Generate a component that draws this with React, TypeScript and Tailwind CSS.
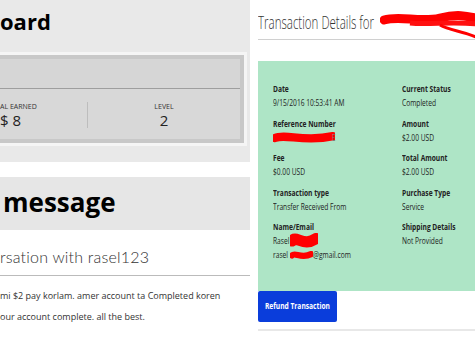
import React from 'react';

const open = { fontFamily: '"Open Sans", "Liberation Sans", sans-serif' };

const details = [
  [
    { label: 'Date', lines: ['9/15/2016 10:53:41 AM'] },
    { label: 'Reference Number', lines: ['ref'] },
    { label: 'Fee', lines: ['$0.00 USD'] },
    { label: 'Transaction type', lines: ['Transfer Received From'] },
    { label: 'Name/Email', lines: ['name', 'email'] },
  ],
  [
    { label: 'Current Status', lines: ['Completed'] },
    { label: 'Amount', lines: ['$2.00 USD'] },
    { label: 'Total Amount', lines: ['$2.00 USD'] },
    { label: 'Purchase Type', lines: ['Service'] },
    { label: 'Shipping Details', lines: ['Not Provided'] },
  ],
];

// the right panel uses a condensed face; squeeze Open Sans to get it
const Cond = ({ children }: { children: React.ReactNode }) => (
  <span className="inline-block origin-left scale-x-[0.7] whitespace-nowrap">{children}</span>
);

// red marker over the private bits
const Blob = ({ w, h }: { w: number; h: number }) => (
  <svg width={w} height={h} viewBox={`0 0 ${w} ${h}`} className="inline-block align-middle shrink-0">
    <path
      d={`M2 ${h / 2} C ${w * 0.2} ${h * 0.1}, ${w * 0.5} ${h * 0.9}, ${w - 2} ${h * 0.35}`}
      stroke="#ff0000"
      strokeWidth={h * 0.7}
      strokeLinecap="round"
      fill="none"
    />
  </svg>
);

const Value = ({ v }: { v: string }) => {
  if (v === 'ref')
    return (
      <div className="flex items-center h-[14px]">
        <Blob w={62} h={12} />
        <span className="-ml-[4px] text-[#777] scale-x-[0.7]">E</span>
      </div>
    );
  if (v === 'name')
    return (
      <div className="flex items-center h-[14px]">
        <span className="inline-block w-[17px] origin-left scale-x-[0.7]">Rasel</span>
        <Blob w={28} h={16} />
      </div>
    );
  if (v === 'email')
    return (
      <div className="flex items-center h-[14px]">
        <span className="inline-block w-[17px] origin-left scale-x-[0.7]">rasel</span>
        <Blob w={23} h={9} />
        <Cond>@gmail.com</Cond>
      </div>
    );
  return (
    <div className="h-[14px]">
      <Cond>{v}</Cond>
    </div>
  );
};

export default function App() {
  return (
    <div className="w-[475px] h-[342px] overflow-hidden bg-white flex" style={open}>
      {/* left: dashboard + messages */}
      <div className="w-[250px] shrink-0 overflow-hidden">
        <div className="bg-[#e9e9e9] pt-[6px] pb-[16px]">
          <h1 className="text-[22px] font-bold leading-[30px] text-black">oard</h1>
          <div className="mt-[16px] -ml-[10px] mr-[3px] border-[3px] border-[#f5f5f5]">
            <div className="border-[4px] border-[#c8c8c8] bg-[#d8d8d8]">
              <div className="h-[30px] border-b border-[#9e9e9e] bg-[#d6d6d6]" />
              <div className="h-[50px] flex items-center pt-[2px]">
                <div className="w-[91px] pl-[3px] border-r border-[#bdbdbd] h-[26px] flex flex-col justify-center">
                  <div className="text-[7px] leading-[10px] text-[#333]">AL EARNED</div>
                  <div className="text-[15px] leading-[16px] text-[#222]">$ 8</div>
                </div>
                <div className="flex-1 flex flex-col items-center">
                  <div className="text-[7px] leading-[10px] text-[#333]">LEVEL</div>
                  <div className="text-[15px] leading-[16px] text-[#222]">2</div>
                </div>
              </div>
            </div>
          </div>
        </div>
        <div className="mt-[15px] h-[53px] bg-[#e6e6e6] flex items-center pl-[3px]">
          <h2 className="text-[26px] font-bold leading-[30px] text-black -mt-[3px]">message</h2>
        </div>
        <div className="h-[46px] border-b border-[#bbbbbb] flex items-center pt-[8px]">
          <div className="text-[16px] font-light text-[#333] tracking-[0.2px]" style={{ fontFamily: 'Lato, "Open Sans", sans-serif' }}>
            rsation with rasel123
          </div>
        </div>
        <div className="text-[9px] text-[#333] leading-[21px] pt-[9px]">
          <p>mi $2 pay korlam. amer account ta Completed koren</p>
          <p>our account complete. all the best.</p>
        </div>
      </div>

      {/* right: transaction card */}
      <div className="ml-[8px] w-[260px] shrink-0">
        <div className="h-[40px] border-b border-[#d0d0d0] pt-[10px] flex items-start">
          <span className="inline-block w-[121px] shrink-0 origin-left scale-x-[0.64] text-[18px] font-light leading-[24px] text-[#333] whitespace-nowrap">
            Transaction Details for
          </span>
          <svg width="100" height="30" viewBox="0 0 100 30" className="mt-[1px] ml-[1px] shrink-0">
            <path d="M4 9 C 20 4, 40 12, 60 7 S 90 6, 100 8" stroke="#ff0000" strokeWidth="9" fill="none" strokeLinecap="round" />
            <path d="M30 12 C 50 14, 70 10, 98 13" stroke="#ff1010" strokeWidth="5" fill="none" />
            <path d="M60 14 C 70 20, 85 20, 100 28" stroke="#ff0000" strokeWidth="3" fill="none" />
          </svg>
        </div>
        <div className="mt-[21px] h-[230px] bg-[#aee5c6] pl-[15px] pt-[21px] flex text-[9.5px] text-[#222]">
          {details.map((col, ci) => (
            <div key={ci} className={ci === 0 ? 'w-[129px]' : 'flex-1'}>
              {col.map(item => (
                <div key={item.label} className="mb-[6.5px] leading-[14px]">
                  <div className="font-bold h-[14px]">
                    <Cond>{item.label}</Cond>
                  </div>
                  {item.lines.map(l => (
                    <Value key={l} v={l} />
                  ))}
                </div>
              ))}
            </div>
          ))}
        </div>
        <div className="pb-[7px] border-b-2 border-[#e8e8e8]">
          <button className="h-[31px] w-[79px] bg-[#0a3ddb] text-white text-[9.5px] font-bold rounded-[2px] flex items-center justify-center">
            <span className="inline-block whitespace-nowrap scale-x-[0.7]">Refund Transaction</span>
          </button>
        </div>
      </div>
    </div>
  );
}
